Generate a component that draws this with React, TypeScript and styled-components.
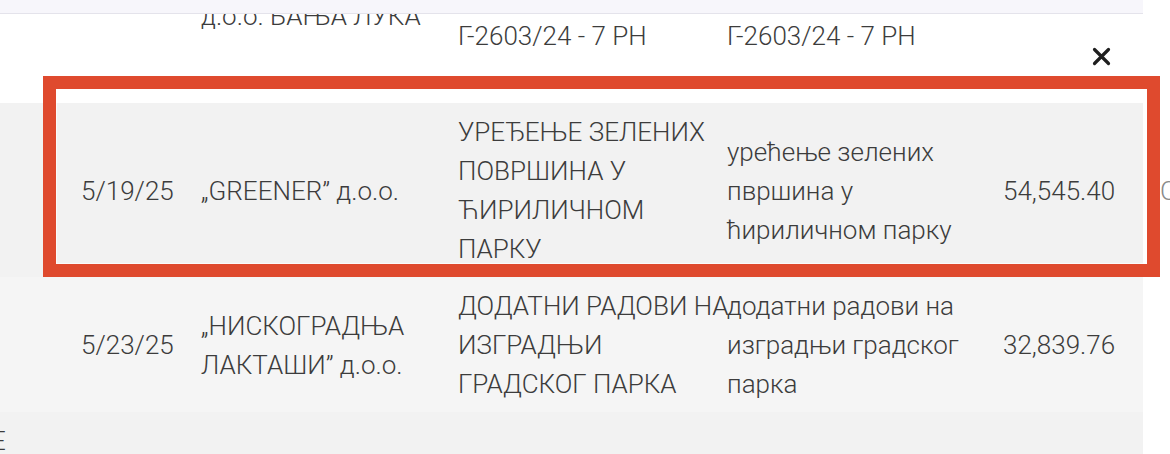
import React from "react";
import styled, {createGlobalStyle} from "styled-components";

const GlobalStyle = createGlobalStyle`
  html, body {
    margin: 0;
    padding: 0;
    background: #ffffff;
    overflow: hidden;
  }
  body {
    font-family: Roboto, "Liberation Sans", sans-serif;
  }
`

const Page = styled.div`
  position: relative;
  width: 1170px;
  height: 454px;
  overflow: hidden;
  background: #ffffff;
`

const StickyBar = styled.div`
  position: sticky;
  top: 0;
  z-index: 2;
  width: 1143px;
  height: 13px;
  background: #f7f6fb;
  border-bottom: 1px solid #e4e3eb;
`

const Table = styled.div`
  width: 1143px;
  margin-top: -46px;
  display: flex;
  flex-direction: column;
`

const Row = styled.div<{ $bg: string; $height?: number }>`
  display: grid;
  grid-template-columns: 81px 120px 257px 269px 276px 157px 20px;
  align-items: center;
  box-sizing: border-box;
  width: 1143px;
  padding: 10px 0 8px;
  background: ${p => p.$bg};
  min-height: ${p => (p.$height ? `${p.$height}px` : "auto")};
`

const Cell = styled.div<{ $offset?: number; $shift?: number; $muted?: boolean }>`
  font-family: "Roboto Light", Roboto, "Liberation Sans", sans-serif;
  font-weight: 300;
  font-size: 26px;
  line-height: 39px;
  color: ${p => (p.$muted ? "#8a8a8a" : "#3c3c3c")};
  white-space: nowrap;
  align-self: ${p => (p.$offset !== undefined ? "start" : "center")};
  margin-top: ${p => (p.$offset !== undefined ? `${p.$offset}px` : "0")};
  margin-left: ${p => (p.$shift ? `${p.$shift}px` : "0")};
`

const Highlight = styled.div`
  position: absolute;
  left: 43px;
  top: 76px;
  width: 1117px;
  height: 201px;
  box-sizing: border-box;
  border: 13px solid #df4a2e;
  box-shadow: inset 0 0 0 1px rgba(255, 255, 255, 0.7);
  z-index: 3;
  pointer-events: none;
`

const CloseButton = styled.button`
  position: absolute;
  left: 1090px;
  top: 45px;
  width: 23px;
  height: 23px;
  padding: 0;
  border: 0;
  background: transparent;
  display: flex;
  align-items: center;
  justify-content: center;
  z-index: 4;
`

type Line = string[];

const Lines = ({lines}: { lines: Line }) => (
  <>
    {lines.map((l, i) => (
      <React.Fragment key={i}>
        {l}
        {i < lines.length - 1 && <br/>}
      </React.Fragment>
    ))}
  </>
);

export default function App() {
  return (
    <Page>
      <GlobalStyle/>
      <StickyBar/>
      <Table>
        <Row $bg="#ffffff" $height={135}>
          <span/>
          <Cell/>
          <Cell $offset={19}>д.о.о. БАЊА ЛУКА</Cell>
          <Cell>Г-2603/24 - 7 РН</Cell>
          <Cell>Г-2603/24 - 7 РН</Cell>
          <Cell/>
        </Row>
        <Row $bg="#f2f2f2">
          <span/>
          <Cell>5/19/25</Cell>
          <Cell>„GREENER” д.о.о.</Cell>
          <Cell><Lines lines={["УРЕЂЕЊЕ ЗЕЛЕНИХ", "ПОВРШИНА У", "ЋИРИЛИЧНОМ", "ПАРКУ"]}/></Cell>
          <Cell><Lines lines={["урећење зелених", "пвршина у", "ћириличном парку"]}/></Cell>
          <Cell>54,545.40</Cell>
          <Cell $muted>С</Cell>
        </Row>
        <Row $bg="#f5f5f5">
          <span/>
          <Cell>5/23/25</Cell>
          <Cell><Lines lines={["„НИСКОГРАДЊА", "ЛАКТАШИ” д.о.о."]}/></Cell>
          <Cell><Lines lines={["ДОДАТНИ РАДОВИ НА", "ИЗГРАДЊИ", "ГРАДСКОГ ПАРКА"]}/></Cell>
          <Cell><Lines lines={["додатни радови на", "изградњи градског", "парка"]}/></Cell>
          <Cell>32,839.76</Cell>
        </Row>
        <Row $bg="#f2f2f2" $height={120}>
          <Cell $offset={0} $shift={-9}>Е</Cell>
        </Row>
      </Table>
      <Highlight/>
      <CloseButton aria-label="close">
        <svg width="19" height="19" viewBox="0 0 19 19">
          <path d="M2.5 2.5 L16.5 16.5 M16.5 2.5 L2.5 16.5" stroke="#1f1f1f" strokeWidth="3.2" strokeLinecap="round"/>
        </svg>
      </CloseButton>
    </Page>
  );
}
